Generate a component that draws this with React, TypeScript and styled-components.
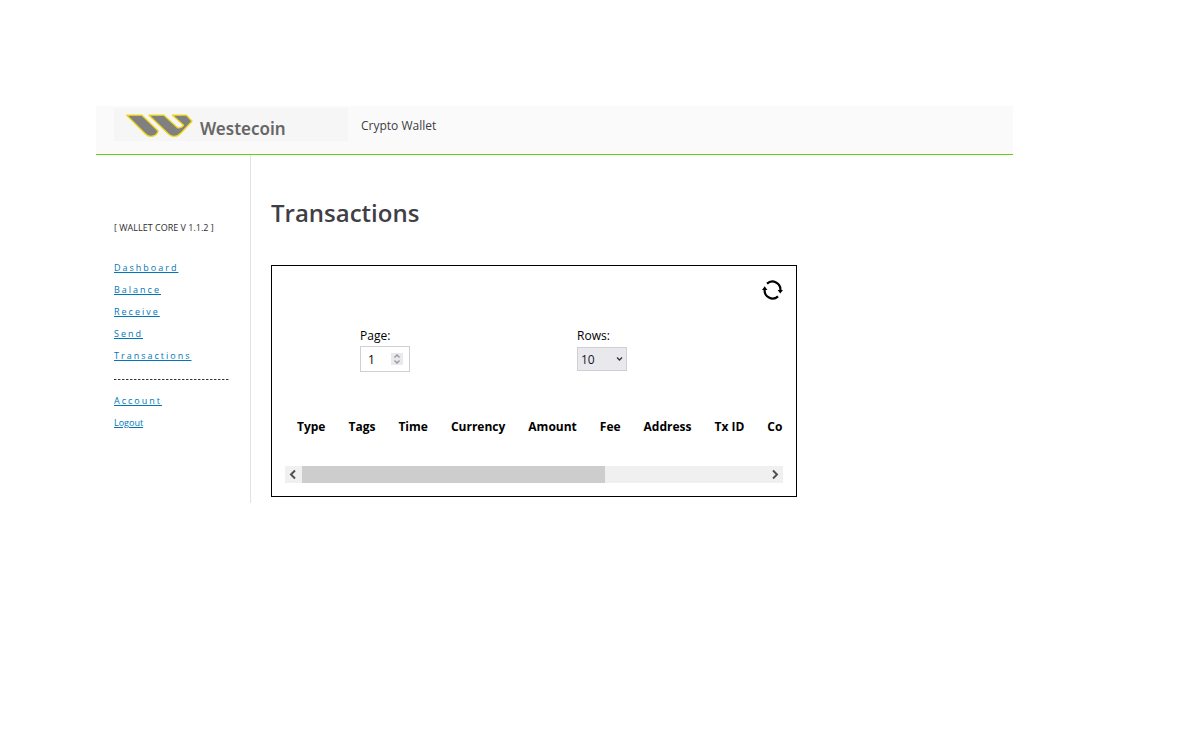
import React, { useState } from "react";
import styled, { createGlobalStyle } from "styled-components";

const GlobalStyle = createGlobalStyle`
  *, *::before, *::after { box-sizing: border-box; }
  body {
    margin: 0;
    background: #fff;
    color: #000;
    font-family: "Segoe UI", "Open Sans", "Noto Sans", sans-serif;
    font-size: 12px;
    line-height: 16px;
  }
  button, input, select { font: inherit; color: inherit; }
`;

const Page = styled.div`
  margin: 106px 14% 0 96px;
`;

const Header = styled.header`
  display: flex;
  align-items: flex-start;
  gap: 13px;
  height: 49px;
  padding: 2px 18px 0;
  background: #fafafa;
  border-bottom: 1px solid #5fd10f;
`;

const Brand = styled.div`
  display: flex;
  align-items: flex-start;
  gap: 6px;
  width: 234px;
  height: 33px;
  padding: 6px 0 0 12px;
  background: #f6f6f6;
`;

const BrandName = styled.span`
  padding-top: 2px;
  color: #666;
  font-family: "Trebuchet MS", "Noto Sans", sans-serif;
  font-size: 17px;
  font-weight: 600;
  line-height: 25px;
`;

const Tagline = styled.span`
  padding-top: 10px;
  color: #3d3d3f;
`;

const Body = styled.div`
  display: flex;
`;

const Sidebar = styled.aside`
  flex: 0 0 155px;
  min-height: 348px;
  padding: 64px 18px 0;
  border-right: 1px solid #e1e1e1;
  font-size: 9px;
  line-height: 18px;
  white-space: nowrap;
`;

const Version = styled.p`
  margin: 0 0 22px;
  color: #2d2d2f;
`;

const LinkList = styled.ul`
  display: flex;
  flex-direction: column;
  gap: 4px;
  margin: 0;
  padding: 0;
  list-style: none;
`;

const NavLink = styled.a<{ $spaced?: boolean }>`
  color: #0077b8;
  letter-spacing: ${(p) => (p.$spaced ? "2px" : "normal")};
  text-underline-offset: 1px;
`;

const Divider = styled.hr`
  width: 115px;
  height: 1px;
  margin: 14px 0 12px;
  border: 0;
  background: repeating-linear-gradient(90deg, #333 0 2px, #aaa 2px 3px, transparent 3px 4px);
`;

const Content = styled.main`
  flex: 1;
  min-width: 0;
  padding: 39px 20px 0;
`;

const Title = styled.h1`
  margin: 0 0 33px;
  color: #3f4045;
  font-size: 24px;
  font-weight: 600;
  line-height: 38px;
`;

const Panel = styled.section`
  max-width: 526px;
  padding: 13px;
  border: 1px solid #000;
`;

const Toolbar = styled.div`
  display: flex;
  justify-content: flex-end;
`;

const IconButton = styled.button`
  display: block;
  width: 22px;
  height: 22px;
  padding: 0;
  border: 0;
  background: none;
`;

const Filters = styled.div`
  display: flex;
  gap: 167px;
  padding: 27px 75px 0;
`;

const Field = styled.div`
  display: flex;
  flex-direction: column;
  gap: 2px;
  width: 50px;
`;

const NumberBox = styled.div`
  display: flex;
  align-items: center;
  height: 26px;
  padding: 0 6px;
  border: 1px solid #d0d0d4;
`;

const NumberInput = styled.input`
  flex: 1;
  min-width: 0;
  padding: 2px 0 0 1px;
  border: 0;
  outline: 0;
  background: none;
  appearance: textfield;
  &::-webkit-inner-spin-button { appearance: none; margin: 0; }
`;

const Stepper = styled.div`
  width: 12px;
  height: 12px;
  background: #e9e9ed;
`;

const StepButton = styled.button`
  display: block;
  width: 12px;
  height: 6px;
  padding: 0;
  border: 0;
  background: none;
  svg { display: block; }
`;

const SelectBox = styled.div`
  display: grid;
  align-items: center;
  height: 24px;
  margin-top: 1px;
  border: 1px solid #d0d0d4;
  background: #e9e9ed;
  > * { grid-area: 1 / 1; }
  svg { justify-self: end; margin-right: 3px; pointer-events: none; }
`;

const Select = styled.select`
  width: 100%;
  height: 22px;
  padding: 2px 3px 0;
  border: 0;
  background: none;
  color: #14142b;
  appearance: none;
`;

const TableClip = styled.div`
  margin-top: 46px;
  overflow: hidden;
`;

const Table = styled.table`
  border-collapse: collapse;
  white-space: nowrap;
`;

const HeadCell = styled.th`
  padding: 0 11px 0 12px;
  font-weight: 700;
  line-height: 18px;
  text-align: left;
`;

const Scrollbar = styled.div`
  display: flex;
  height: 17px;
  margin-top: 30px;
  background: #f0f0f0;
`;

const ScrollButton = styled.button`
  flex: 0 0 17px;
  height: 17px;
  padding: 0;
  border: 0;
  background: none;
  svg { display: block; }
`;

const Track = styled.div`
  flex: 1;
`;

const Thumb = styled.div`
  width: 65.3%;
  height: 17px;
  background: #cdcdcd;
`;

const mainLinks = ["Dashboard", "Balance", "Receive", "Send", "Transactions"];
const columns = ["Type", "Tags", "Time", "Currency", "Amount", "Fee", "Address", "Tx ID", "Confirmations"];

const LogoMark = () => (
  <svg width="68" height="24" viewBox="0 0 68 24" aria-hidden="true">
    <g fill="#808080" stroke="#f0d818" strokeWidth="1.3" strokeLinejoin="round">
      <path d="M0.7 1.2 H16 L32.2 17 Q30.5 22.5 24.5 22.3 Q21.5 22.3 19.5 20 Z" />
      <path d="M23 1.2 H38 L51.5 13.8 Q55.5 14.6 57.6 11.2 L46.5 1.2 H60.5 L66 7.2 L55 19 Q51.5 22.7 47.5 22.3 Q44.5 22.2 42.5 20 Z" />
    </g>
  </svg>
);

const RefreshIcon = () => (
  <svg width="22" height="22" viewBox="0 0 22 22" aria-hidden="true">
    <g fill="none" stroke="#000" strokeWidth="2.2">
      <path d="M6 4.6 A8 8 0 0 1 19.3 11.5" />
      <path d="M17 17.4 A8 8 0 0 1 3.7 10.5" />
    </g>
    <path d="M16.6 11 H22 L19.3 14.6 Z M1 11 H6.4 L3.7 7.2 Z" />
  </svg>
);

export default function App() {
  const [page, setPage] = useState(1);
  const [rows, setRows] = useState("10");

  return (
    <>
      <GlobalStyle />
      <Page>
        <Header>
          <Brand>
            <LogoMark />
            <BrandName>Westecoin</BrandName>
          </Brand>
          <Tagline>Crypto Wallet</Tagline>
        </Header>
        <Body>
          <Sidebar>
            <Version>[ WALLET CORE V 1.1.2 ]</Version>
            <nav aria-label="Wallet">
              <LinkList>
                {mainLinks.map((name) => (
                  <li key={name}>
                    <NavLink href={`#${name.toLowerCase()}`} $spaced>{name}</NavLink>
                  </li>
                ))}
              </LinkList>
              <Divider />
              <LinkList>
                <li><NavLink href="#account" $spaced>Account</NavLink></li>
                <li><NavLink href="#logout">Logout</NavLink></li>
              </LinkList>
            </nav>
          </Sidebar>
          <Content>
            <Title>Transactions</Title>
            <Panel>
              <Toolbar>
                <IconButton type="button" aria-label="Refresh"><RefreshIcon /></IconButton>
              </Toolbar>
              <Filters>
                <Field>
                  <label htmlFor="page">Page:</label>
                  <NumberBox>
                    <NumberInput
                      id="page"
                      type="number"
                      min={1}
                      value={page}
                      onChange={(e) => setPage(Number(e.target.value))}
                    />
                    <Stepper>
                      <StepButton type="button" aria-label="Next page" onClick={() => setPage(page + 1)}>
                        <svg width="12" height="6" viewBox="0 0 12 6"><path d="M3.5 4.5 L6 2 L8.5 4.5" fill="none" stroke="#98989c" strokeWidth="1.3" /></svg>
                      </StepButton>
                      <StepButton type="button" aria-label="Previous page" onClick={() => setPage(Math.max(1, page - 1))}>
                        <svg width="12" height="6" viewBox="0 0 12 6"><path d="M3.5 1.5 L6 4 L8.5 1.5" fill="none" stroke="#98989c" strokeWidth="1.3" /></svg>
                      </StepButton>
                    </Stepper>
                  </NumberBox>
                </Field>
                <Field>
                  <label htmlFor="rows">Rows:</label>
                  <SelectBox>
                    <Select id="rows" value={rows} onChange={(e) => setRows(e.target.value)}>
                      <option>10</option>
                      <option>20</option>
                      <option>50</option>
                    </Select>
                    <svg width="7" height="6" viewBox="0 0 7 6"><path d="M1 1.5 L3.5 4 L6 1.5" fill="none" stroke="#333" strokeWidth="1.3" /></svg>
                  </SelectBox>
                </Field>
              </Filters>
              <TableClip>
                <Table>
                  <thead>
                    <tr>
                      {columns.map((name) => <HeadCell key={name} scope="col">{name}</HeadCell>)}
                    </tr>
                  </thead>
                </Table>
              </TableClip>
              <Scrollbar>
                <ScrollButton type="button" aria-label="Scroll left">
                  <svg width="17" height="17" viewBox="0 0 17 17"><path d="M10 4.5 L6 8.5 L10 12.5" fill="none" stroke="#505050" strokeWidth="2" /></svg>
                </ScrollButton>
                <Track><Thumb /></Track>
                <ScrollButton type="button" aria-label="Scroll right">
                  <svg width="17" height="17" viewBox="0 0 17 17"><path d="M7 4.5 L11 8.5 L7 12.5" fill="none" stroke="#505050" strokeWidth="2" /></svg>
                </ScrollButton>
              </Scrollbar>
            </Panel>
          </Content>
        </Body>
      </Page>
    </>
  );
}
